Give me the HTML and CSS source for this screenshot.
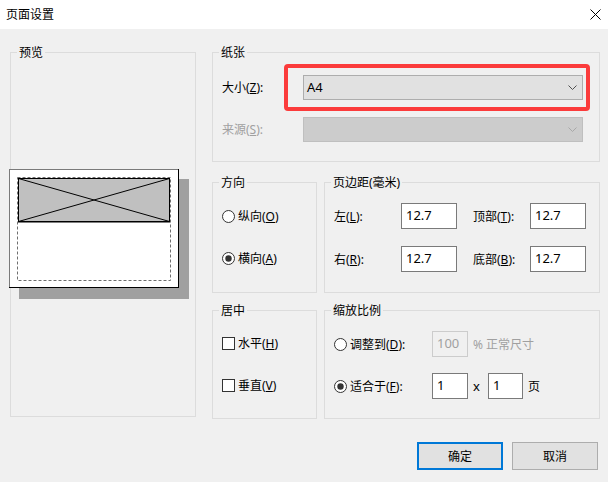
FILE: index.html
```html
<!DOCTYPE html>
<html lang="zh-CN">
<head>
<meta charset="utf-8">
<title>页面设置</title>
<link rel="stylesheet" href="styles.css">
</head>
<body>
<div class="window">
  <div class="titlebar">
    <span class="title">页面设置</span>
    <svg class="close" width="11" height="11" viewBox="0 0 11 11"><path d="M0.5 0.5 L10.5 10.5 M10.5 0.5 L0.5 10.5" stroke="#000" stroke-width="1" fill="none"/></svg>
  </div>
  <div class="main">
    <div class="group preview">
      <span class="legend">预览</span>
      <svg class="sheet" width="182" height="132" viewBox="0 0 182 132">
        <rect x="10" y="10" width="170" height="120" fill="#a0a0a0"/>
        <rect x="0.5" y="0.5" width="169" height="118" fill="#fff" stroke="#7a7a7a"/>
        <path d="M169.5 0 V119 M0 118.5 H170" stroke="#000" fill="none"/>
        <rect x="8.5" y="8.5" width="153" height="103" fill="none" stroke="#6e6e6e" stroke-dasharray="3 2"/>
        <rect x="9.5" y="9.5" width="151" height="43" fill="#c0c0c0" stroke="#000"/>
        <path d="M9.5 9.5 L160.5 52.5 M160.5 9.5 L9.5 52.5" stroke="#000" fill="none"/>
        <path d="M9 53 H161" stroke="#000" fill="none"/>
      </svg>
    </div>
    <div class="right">
      <div class="group paper">
        <span class="legend">纸张</span>
        <div class="highlight"></div>
        <div class="field-row">
          <span class="label">大小(<u>Z</u>):</span>
          <div class="combo">
            <span>A4</span>
            <svg width="9" height="5" viewBox="0 0 9 5"><path d="M0.5 0.5 L4.5 4.5 L8.5 0.5" stroke="#505050" fill="none"/></svg>
          </div>
        </div>
        <div class="field-row disabled">
          <span class="label">来源(<u>S</u>):</span>
          <div class="combo combo-disabled">
            <span></span>
            <svg width="9" height="5" viewBox="0 0 9 5"><path d="M0.5 0.5 L4.5 4.5 L8.5 0.5" stroke="#a8a8a8" fill="none"/></svg>
          </div>
        </div>
      </div>
      <div class="row-pair row2">
        <div class="group narrow orient">
          <span class="legend">方向</span>
          <div class="choice">
            <svg class="radio" width="13" height="13" viewBox="0 0 13 13"><circle cx="6.5" cy="6.5" r="6" fill="#fff" stroke="#333"/></svg>
            <span>纵向(<u>O</u>)</span>
          </div>
          <div class="choice">
            <svg class="radio" width="13" height="13" viewBox="0 0 13 13"><circle cx="6.5" cy="6.5" r="6" fill="#fff" stroke="#333"/><circle cx="6.5" cy="6.5" r="3.2" fill="#333"/></svg>
            <span>横向(<u>A</u>)</span>
          </div>
        </div>
        <div class="group wide margins">
          <span class="legend">页边距(毫米)</span>
          <div class="margin-grid">
            <span>左(<u>L</u>):</span><div class="num">12.7</div>
            <span>顶部(<u>T</u>):</span><div class="num">12.7</div>
            <span>右(<u>R</u>):</span><div class="num">12.7</div>
            <span>底部(<u>B</u>):</span><div class="num">12.7</div>
          </div>
        </div>
      </div>
      <div class="row-pair row3">
        <div class="group narrow centering">
          <span class="legend">居中</span>
          <div class="choice">
            <span class="check"></span>
            <span>水平(<u>H</u>)</span>
          </div>
          <div class="choice">
            <span class="check"></span>
            <span>垂直(<u>V</u>)</span>
          </div>
        </div>
        <div class="group wide scale">
          <span class="legend">缩放比例</span>
          <div class="scale-row">
            <div class="choice scale-choice">
              <svg class="radio" width="13" height="13" viewBox="0 0 13 13"><circle cx="6.5" cy="6.5" r="6" fill="#fff" stroke="#333"/></svg>
              <span>调整到(<u>D</u>):</span>
            </div>
            <div class="num small num-disabled">100</div>
            <span class="after grey">% 正常尺寸</span>
          </div>
          <div class="scale-row">
            <div class="choice scale-choice">
              <svg class="radio" width="13" height="13" viewBox="0 0 13 13"><circle cx="6.5" cy="6.5" r="6" fill="#fff" stroke="#333"/><circle cx="6.5" cy="6.5" r="3.2" fill="#333"/></svg>
              <span>适合于(<u>F</u>):</span>
            </div>
            <div class="num small">1</div>
            <span class="after times">x</span>
            <div class="num small second">1</div>
            <span class="after">页</span>
          </div>
        </div>
      </div>
    </div>
  </div>
  <div class="buttons">
    <button class="btn default">确定</button>
    <button class="btn">取消</button>
  </div>
</div>
</body>
</html>
```

FILE: styles.css
```css
* { box-sizing: border-box; }

body {
  margin: 0;
  background: #f0f0f0;
  font-family: "Noto Sans", "Noto Sans CJK SC", sans-serif;
  font-size: 12px;
  line-height: 17px;
  color: #000;
}

u { text-decoration: underline; text-underline-offset: 1px; }

.window {
  width: 608px;
  height: 482px;
  overflow: hidden;
}

.titlebar {
  height: 29px;
  background: #fff;
  display: flex;
  align-items: center;
  justify-content: space-between;
  padding: 0 7px 1px 6px;
}

.close { display: block; }

.main {
  display: flex;
  gap: 16px;
  padding: 23px 0 0 10px;
}

.group {
  position: relative;
  border: 1px solid #dcdcdc;
}

.legend {
  position: absolute;
  top: -9px;
  left: 6px;
  padding: 0 2px;
  background: #f0f0f0;
  line-height: 17px;
  white-space: nowrap;
}

.preview {
  width: 186px;
  height: 365px;
}

.sheet {
  position: absolute;
  left: -2px;
  top: 116px;
  display: block;
}

.right {
  width: 388px;
  display: flex;
  flex-direction: column;
}

.paper {
  height: 110px;
  margin-bottom: 20px;
  padding: 22px 0 0 9px;
}

.highlight {
  position: absolute;
  top: 11px;
  left: 71px;
  width: 306px;
  height: 47px;
  border: 4px solid #fb3b3b;
  border-radius: 4px;
}

.field-row {
  display: flex;
  align-items: center;
  height: 25px;
}

.field-row + .field-row { margin-top: 17px; }

.label { width: 81px; }

.disabled .label { color: #a0a0a0; }

.combo {
  width: 280px;
  height: 25px;
  border: 1px solid #adadad;
  background: #e1e1e1;
  display: flex;
  align-items: center;
  justify-content: space-between;
  padding: 0 5px 0 3px;
  font-size: 13px;
}

.combo svg { display: block; }

.combo-disabled {
  background: #cccccc;
  border-color: #bfbfbf;
}

.row-pair {
  display: flex;
  gap: 7px;
}

.row2 { height: 111px; margin-bottom: 17px; }
.row3 { height: 109px; }

.narrow { width: 105px; padding-left: 9px; }
.wide { width: 276px; padding-left: 9px; }

.orient { padding-top: 25px; }
.centering { padding-top: 24px; }

.choice {
  display: flex;
  align-items: center;
  gap: 3px;
  height: 17px;
  white-space: nowrap;
}

.narrow .choice + .choice { margin-top: 25px; }

.radio { display: block; flex: none; }

.check {
  width: 13px;
  height: 13px;
  border: 1px solid #333;
  background: #fff;
  flex: none;
}

.margins { padding-top: 20px; }

.margin-grid {
  display: grid;
  grid-template-columns: 67px 72px 57px 56px;
  grid-auto-rows: 26px;
  row-gap: 17px;
  align-items: center;
  white-space: nowrap;
}

.num {
  width: 56px;
  height: 26px;
  border: 1px solid #7a7a7a;
  background: #fff;
  display: flex;
  align-items: center;
  padding: 0 0 2px 4px;
  font-size: 13px;
}

.scale { padding-top: 20px; }

.scale-row {
  display: flex;
  align-items: center;
  height: 26px;
}

.scale-row + .scale-row { margin-top: 16px; }

.scale-choice { width: 98px; }

.num.small { width: 36px; }
.num.second { width: 35px; margin-left: 8px; }

.num-disabled {
  background: #f0f0f0;
  border-color: #cccccc;
  color: #a0a0a0;
}

.after { margin-left: 5px; white-space: nowrap; }
.grey { color: #a0a0a0; }
.times { font-size: 13px; }

.buttons {
  display: flex;
  justify-content: flex-end;
  gap: 9px;
  padding: 23px 10px 0 0;
}

.btn {
  width: 86px;
  height: 28px;
  margin: 0;
  padding: 0;
  border: 1px solid #adadad;
  background: #e1e1e1;
  font: inherit;
  color: #000;
  display: flex;
  align-items: center;
  justify-content: center;
}

.btn.default { border: 2px solid #0078d7; }
```
